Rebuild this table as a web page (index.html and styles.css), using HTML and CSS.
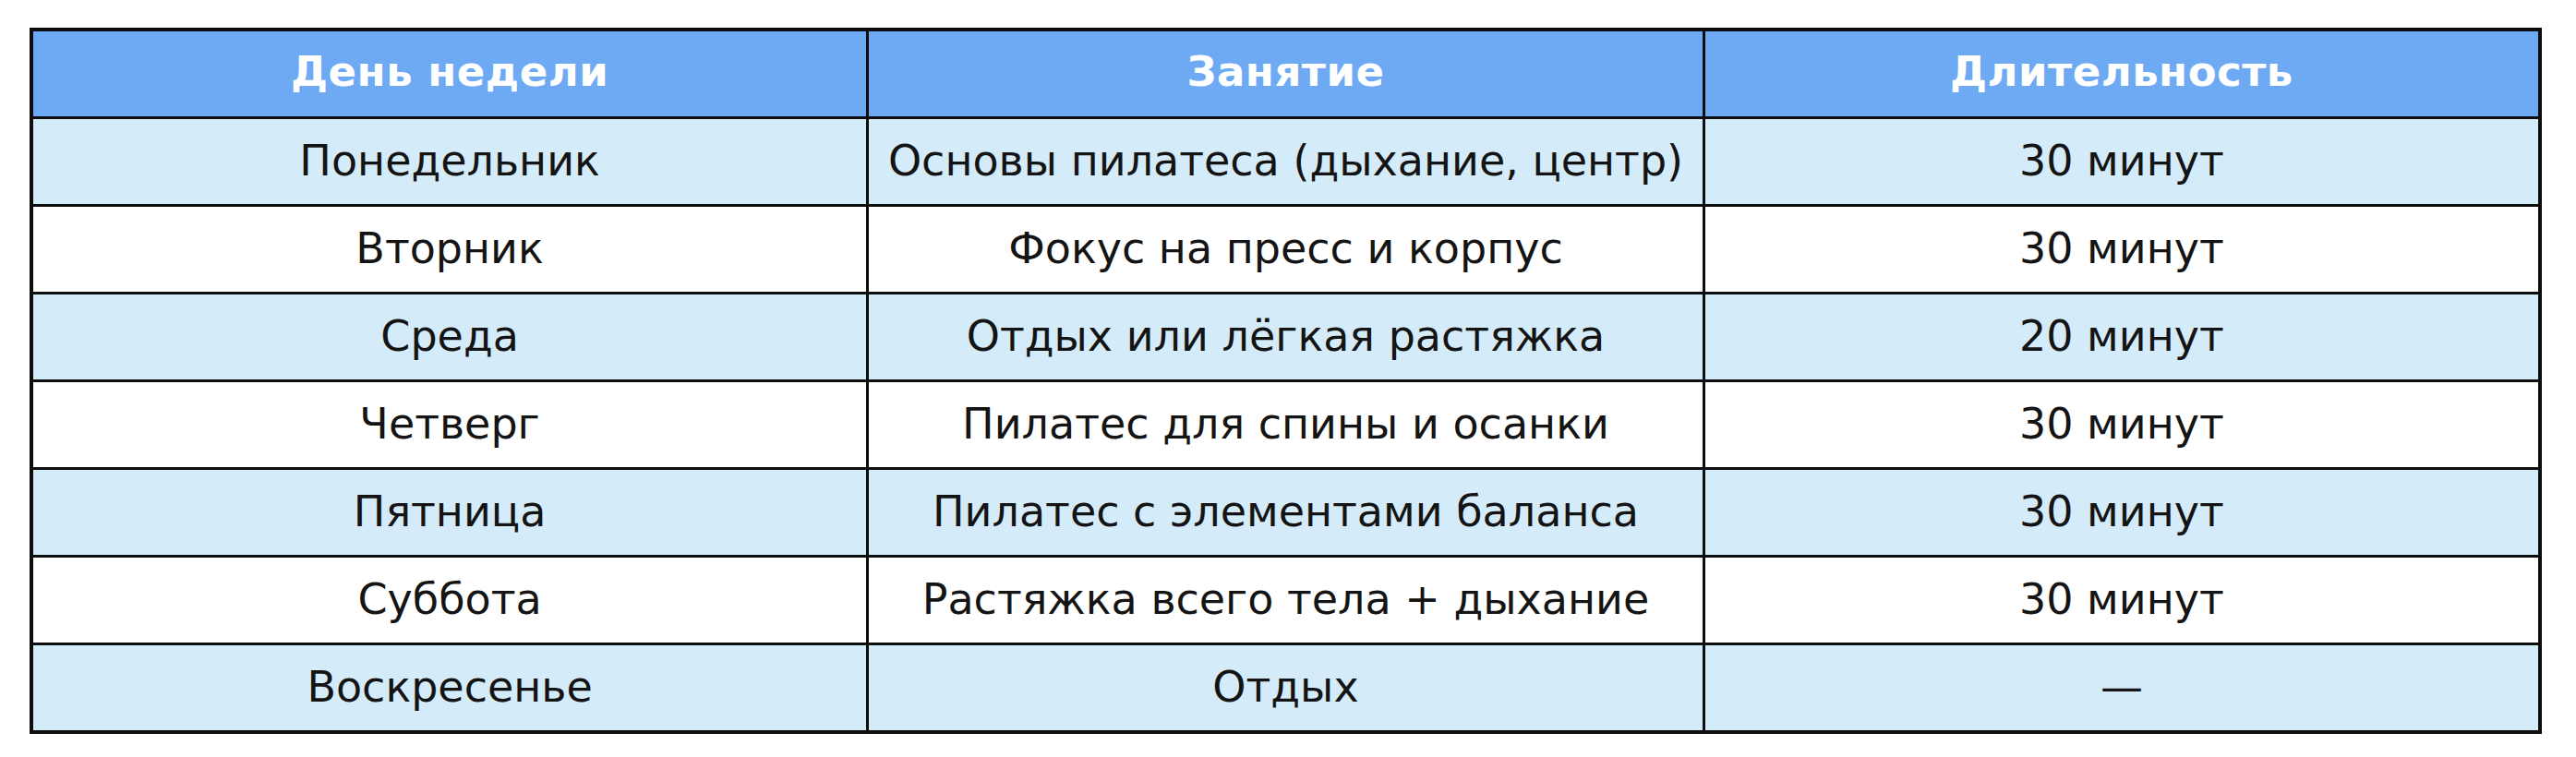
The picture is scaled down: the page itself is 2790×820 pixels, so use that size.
FILE: index.html
```html
<!DOCTYPE html>
<html lang="ru">
<head>
<meta charset="utf-8">
<title>Расписание</title>
<link rel="stylesheet" href="styles.css">
</head>
<body>
<table class="schedule">
  <thead>
    <tr><th>День недели</th><th>Занятие</th><th>Длительность</th></tr>
  </thead>
  <tbody>
    <tr class="alt"><td>Понедельник</td><td>Основы пилатеса (дыхание, центр)</td><td>30 минут</td></tr>
    <tr><td>Вторник</td><td>Фокус на пресс и корпус</td><td>30 минут</td></tr>
    <tr class="alt"><td>Среда</td><td>Отдых или лёгкая растяжка</td><td>20 минут</td></tr>
    <tr><td>Четверг</td><td>Пилатес для спины и осанки</td><td>30 минут</td></tr>
    <tr class="alt"><td>Пятница</td><td>Пилатес с элементами баланса</td><td>30 минут</td></tr>
    <tr><td>Суббота</td><td>Растяжка всего тела + дыхание</td><td>30 минут</td></tr>
    <tr class="alt"><td>Воскресенье</td><td>Отдых</td><td>—</td></tr>
  </tbody>
</table>
</body>
</html>
```

FILE: styles.css
```css
html, body {
  margin: 0;
  padding: 0;
  background: #ffffff;
}
body {
  padding: 30px 0 0 32px;
  font-family: "DejaVu Sans", "Liberation Sans", sans-serif;
}
.schedule {
  width: 2721px;
  border-collapse: collapse;
  table-layout: fixed;
  border: 4px solid #0d0d0d;
}
.schedule th,
.schedule td {
  border: 3px solid #0d0d0d;
  text-align: center;
  vertical-align: middle;
  padding: 0;
  line-height: 1.15;
}
.schedule th {
  background: #6daaf3;
  color: #ffffff;
  font-weight: bold;
  font-size: 45px;
  letter-spacing: 0.5px;
  height: 88px;
  padding-bottom: 4px;
}
.schedule td {
  color: #141414;
  font-size: 46px;
  background: #ffffff;
  height: 90px;
  padding-bottom: 2px;
}
.schedule tr.alt td {
  background: #d4ebf9;
}
```
